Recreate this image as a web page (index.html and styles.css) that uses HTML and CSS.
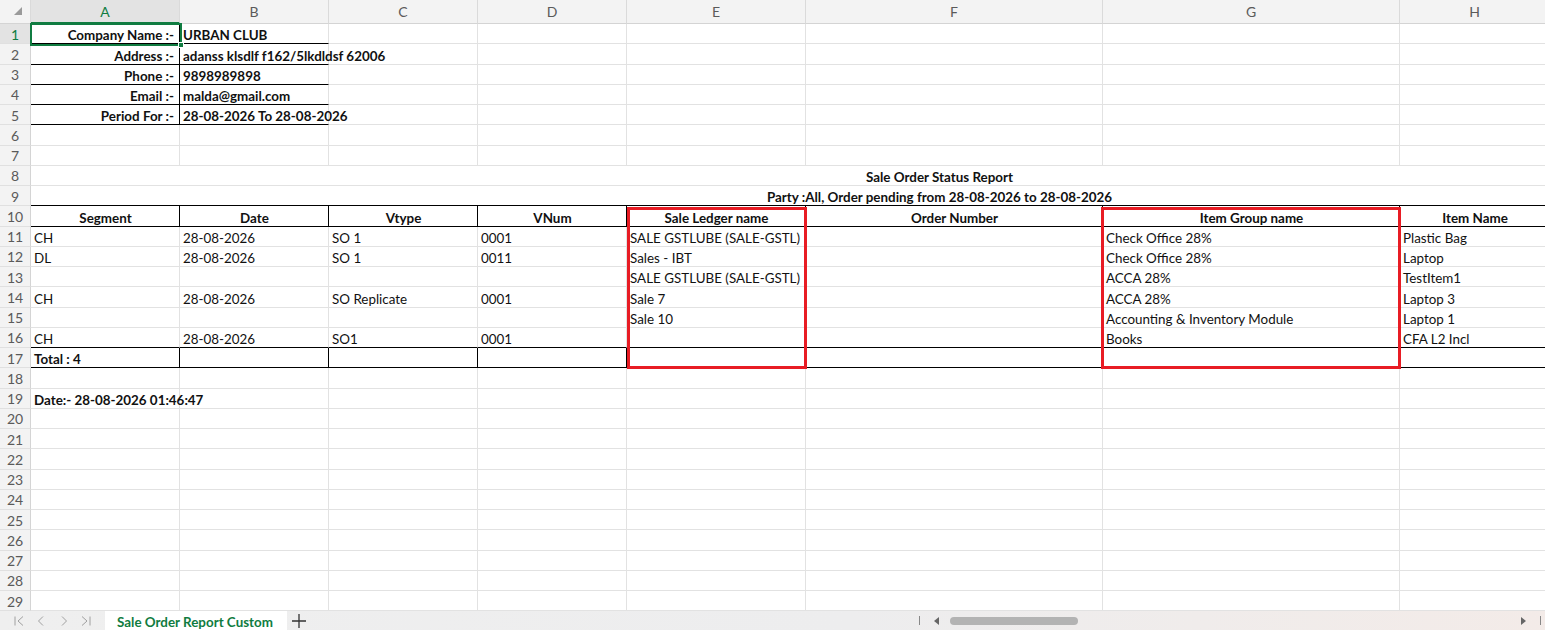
FILE: index.html
```html
<!DOCTYPE html>
<html>
<head>
<meta charset="utf-8">
<link rel="stylesheet" href="styles.css">
</head>
<body>
<div class="app">
  <div class="sheet">
    <div class="row colhead">
      <div class="corner"><svg width="10" height="10" viewBox="0 0 10 10"><polygon points="9,1 9,9 1,9" fill="#9a9a9a"/></svg></div>
      <div class="ch sel">A</div><div class="ch">B</div><div class="ch">C</div><div class="ch">D</div><div class="ch">E</div><div class="ch">F</div><div class="ch">G</div><div class="ch">H</div>
    </div>

    <div class="row"><div class="rh sel">1</div><div class="c b r bb br">Company Name :-</div><div class="c b bb">URBAN CLUB</div><div class="c"></div><div class="c"></div><div class="c"></div><div class="c"></div><div class="c"></div><div class="c"></div></div>
    <div class="row"><div class="rh">2</div><div class="c b r bb br">Address :-</div><div class="c b bb">adanss klsdlf f162/5lkdldsf 62006</div><div class="c"></div><div class="c"></div><div class="c"></div><div class="c"></div><div class="c"></div><div class="c"></div></div>
    <div class="row"><div class="rh">3</div><div class="c b r bb br">Phone :-</div><div class="c b bb">9898989898</div><div class="c"></div><div class="c"></div><div class="c"></div><div class="c"></div><div class="c"></div><div class="c"></div></div>
    <div class="row"><div class="rh">4</div><div class="c b r bb br">Email :-</div><div class="c b bb">malda@gmail.com</div><div class="c"></div><div class="c"></div><div class="c"></div><div class="c"></div><div class="c"></div><div class="c"></div></div>
    <div class="row"><div class="rh">5</div><div class="c b r bb br">Period For :-</div><div class="c b bb">28-08-2026 To 28-08-2026</div><div class="c"></div><div class="c"></div><div class="c"></div><div class="c"></div><div class="c"></div><div class="c"></div></div>
    <div class="row"><div class="rh">6</div><div class="c"></div><div class="c"></div><div class="c"></div><div class="c"></div><div class="c"></div><div class="c"></div><div class="c"></div><div class="c"></div></div>
    <div class="row"><div class="rh">7</div><div class="c"></div><div class="c"></div><div class="c"></div><div class="c"></div><div class="c"></div><div class="c"></div><div class="c"></div><div class="c"></div></div>
    <div class="row"><div class="rh">8</div><div class="c b merged">Sale Order Status Report</div></div>
    <div class="row"><div class="rh">9</div><div class="c b merged bb">Party :All, Order pending from 28-08-2026 to 28-08-2026</div></div>

    <div class="row"><div class="rh">10</div><div class="c b m bb br">Segment</div><div class="c b m bb br">Date</div><div class="c b m bb br">Vtype</div><div class="c b m bb br">VNum</div><div class="c b m bb br">Sale Ledger name</div><div class="c b m bb br">Order Number</div><div class="c b m bb br">Item Group name</div><div class="c b m bb br">Item Name</div></div>
    <div class="row"><div class="rh">11</div><div class="c">CH</div><div class="c">28-08-2026</div><div class="c">SO 1</div><div class="c">0001</div><div class="c">SALE GSTLUBE (SALE-GSTL)</div><div class="c"></div><div class="c">Check Office 28%</div><div class="c">Plastic Bag</div></div>
    <div class="row"><div class="rh">12</div><div class="c">DL</div><div class="c">28-08-2026</div><div class="c">SO 1</div><div class="c">0011</div><div class="c">Sales - IBT</div><div class="c"></div><div class="c">Check Office 28%</div><div class="c">Laptop</div></div>
    <div class="row"><div class="rh">13</div><div class="c"></div><div class="c"></div><div class="c"></div><div class="c"></div><div class="c">SALE GSTLUBE (SALE-GSTL)</div><div class="c"></div><div class="c">ACCA 28%</div><div class="c">TestItem1</div></div>
    <div class="row"><div class="rh">14</div><div class="c">CH</div><div class="c">28-08-2026</div><div class="c">SO Replicate</div><div class="c">0001</div><div class="c">Sale 7</div><div class="c"></div><div class="c">ACCA 28%</div><div class="c">Laptop 3</div></div>
    <div class="row"><div class="rh">15</div><div class="c"></div><div class="c"></div><div class="c"></div><div class="c"></div><div class="c">Sale 10</div><div class="c"></div><div class="c">Accounting &amp; Inventory Module</div><div class="c">Laptop 1</div></div>
    <div class="row"><div class="rh">16</div><div class="c bb">CH</div><div class="c bb">28-08-2026</div><div class="c bb">SO1</div><div class="c bb">0001</div><div class="c bb"></div><div class="c bb"></div><div class="c bb">Books</div><div class="c bb">CFA L2 Incl</div></div>
    <div class="row"><div class="rh">17</div><div class="c b bb br">Total : 4</div><div class="c bb br"></div><div class="c bb br"></div><div class="c bb br"></div><div class="c bb br"></div><div class="c bb br"></div><div class="c bb br"></div><div class="c bb br"></div></div>
    <div class="row"><div class="rh">18</div><div class="c"></div><div class="c"></div><div class="c"></div><div class="c"></div><div class="c"></div><div class="c"></div><div class="c"></div><div class="c"></div></div>
    <div class="row"><div class="rh">19</div><div class="c b">Date:- 28-08-2026 01:46:47</div><div class="c"></div><div class="c"></div><div class="c"></div><div class="c"></div><div class="c"></div><div class="c"></div><div class="c"></div></div>
    <div class="row"><div class="rh">20</div><div class="c"></div><div class="c"></div><div class="c"></div><div class="c"></div><div class="c"></div><div class="c"></div><div class="c"></div><div class="c"></div></div>
    <div class="row"><div class="rh">21</div><div class="c"></div><div class="c"></div><div class="c"></div><div class="c"></div><div class="c"></div><div class="c"></div><div class="c"></div><div class="c"></div></div>
    <div class="row"><div class="rh">22</div><div class="c"></div><div class="c"></div><div class="c"></div><div class="c"></div><div class="c"></div><div class="c"></div><div class="c"></div><div class="c"></div></div>
    <div class="row"><div class="rh">23</div><div class="c"></div><div class="c"></div><div class="c"></div><div class="c"></div><div class="c"></div><div class="c"></div><div class="c"></div><div class="c"></div></div>
    <div class="row"><div class="rh">24</div><div class="c"></div><div class="c"></div><div class="c"></div><div class="c"></div><div class="c"></div><div class="c"></div><div class="c"></div><div class="c"></div></div>
    <div class="row"><div class="rh">25</div><div class="c"></div><div class="c"></div><div class="c"></div><div class="c"></div><div class="c"></div><div class="c"></div><div class="c"></div><div class="c"></div></div>
    <div class="row"><div class="rh">26</div><div class="c"></div><div class="c"></div><div class="c"></div><div class="c"></div><div class="c"></div><div class="c"></div><div class="c"></div><div class="c"></div></div>
    <div class="row"><div class="rh">27</div><div class="c"></div><div class="c"></div><div class="c"></div><div class="c"></div><div class="c"></div><div class="c"></div><div class="c"></div><div class="c"></div></div>
    <div class="row"><div class="rh">28</div><div class="c"></div><div class="c"></div><div class="c"></div><div class="c"></div><div class="c"></div><div class="c"></div><div class="c"></div><div class="c"></div></div>
    <div class="row"><div class="rh">29</div><div class="c"></div><div class="c"></div><div class="c"></div><div class="c"></div><div class="c"></div><div class="c"></div><div class="c"></div><div class="c"></div></div>

    <div class="selection"><span class="handle"></span></div>
    <div class="redbox box-e"></div>
    <div class="redbox box-g"></div>
  </div>

  <div class="tabbar">
    <div class="nav">
      <svg width="12" height="12" viewBox="0 0 12 12"><path d="M2 1.5v9M10 1.5 5 6l5 4.5" fill="none" stroke="#a0a0a0" stroke-width="1"/></svg>
      <svg width="12" height="12" viewBox="0 0 12 12"><path d="M8 1.5 3.5 6 8 10.5" fill="none" stroke="#a0a0a0" stroke-width="1"/></svg>
      <svg width="12" height="12" viewBox="0 0 12 12"><path d="M4 1.5 8.5 6 4 10.5" fill="none" stroke="#a0a0a0" stroke-width="1"/></svg>
      <svg width="12" height="12" viewBox="0 0 12 12"><path d="M2 1.5 7 6l-5 4.5M10 1.5v9" fill="none" stroke="#a0a0a0" stroke-width="1"/></svg>
    </div>
    <div class="tab">Sale Order Report Custom</div>
    <div class="add"><svg width="14" height="14" viewBox="0 0 14 14"><path d="M7 0v14M0 7h14" stroke="#333" stroke-width="1.3"/></svg></div>
    <div class="spacer"></div>
    <div class="hscroll">
      <span class="tick"></span>
      <svg class="arrow-l" width="6" height="8" viewBox="0 0 6 8"><polygon points="5,0 5,8 0,4" fill="#666"/></svg>
      <span class="thumb"></span>
      <span class="track"></span>
      <svg class="arrow-r" width="6" height="8" viewBox="0 0 6 8"><polygon points="1,0 1,8 6,4" fill="#666"/></svg>
      <span class="tick"></span>
    </div>
  </div>
</div>
</body>
</html>
```

FILE: styles.css
```css
* { box-sizing: border-box; }
html, body { margin: 0; padding: 0; }
body {
  width: 1545px;
  height: 630px;
  overflow: hidden;
  background: #fff;
  font-family: Lato, "Liberation Sans", sans-serif;
  font-size: 13.4px;
  color: #111;
}
.app { display: flex; flex-direction: column; height: 630px; }
.sheet { position: relative; flex: none; }
.row {
  display: grid;
  grid-template-columns: 31px 149px 149px 149px 149px 179px 297px 297px 150px;
  height: 20.25px;
  width: 1550px;
}
.colhead { height: 24px; background: #f3f3f3; }
.corner {
  display: flex; align-items: flex-end; justify-content: flex-end;
  padding: 0 7px 7px 0;
  border-right: 1px solid #dadada;
  border-bottom: 1px solid #d4d4d4;
}
.ch {
  display: flex; align-items: center; justify-content: center;
  color: #5a5a5a; font-size: 14px;
  border-right: 1px solid #dadada;
  border-bottom: 1px solid #d4d4d4;
}
.ch.sel { background: #e3e3e3; color: #107c41; border-bottom: 2px solid #107c41; }
.rh {
  display: flex; align-items: center; justify-content: center;
  color: #5a5a5a; font-size: 14px;
  padding-top: 1px;
  background: #f3f3f3;
  border-right: 1px solid #d4d4d4;
  border-bottom: 1px solid #e0e0e0;
}
.rh.sel { background: #e3e3e3; color: #107c41; }
.c {
  display: flex; align-items: flex-end;
  padding: 0 2px 0 3px;
  white-space: nowrap;
  line-height: 15px;
  border-right: 1px solid #e2e2e2;
  border-bottom: 1px solid #e2e2e2;
  min-width: 0;
}
.b { font-weight: bold; }
.r { justify-content: flex-end; padding-right: 5px; }
.m { justify-content: center; }
.bb { border-bottom-color: #000; }
.br { border-right-color: #000; }
.merged {
  grid-column: 2 / -1;
  justify-content: center;
  padding-left: 300px;
  border-right: none;
}
.selection {
  position: absolute;
  left: 30px; top: 23px;
  width: 152px; height: 23px;
  border: 2px solid #107c41;
}
.handle {
  position: absolute;
  right: -4px; bottom: -4px;
  width: 6px; height: 6px;
  background: #107c41;
  border: 1px solid #fff;
}
.redbox {
  position: absolute;
  border: 3px solid #e81c24;
  top: 207px;
  height: 162px;
}
.box-e { left: 627px; width: 180px; }
.box-g { left: 1101px; width: 300px; }

.tabbar {
  flex: 1;
  display: flex;
  align-items: stretch;
  background: linear-gradient(90deg, #efefef 0%, #ededee 55%, #f3ebe8 100%);
}
.nav {
  width: 105px;
  display: flex; align-items: center; justify-content: space-around;
  padding: 0 8px 0 8px;
}
.tab {
  background: #fff;
  color: #107c41;
  font-weight: bold;
  font-size: 13.4px;
  padding: 2px 10px 0 12px;
  display: flex; align-items: center;
  width: 182px;
}
.add { width: 24px; display: flex; align-items: center; justify-content: center; }
.spacer { flex: 1; }
.hscroll {
  width: 630px;
  display: flex; align-items: center;
  padding: 0 4px 0 4px;
}
.tick { width: 1px; height: 9px; background: #888; flex: none; }
.arrow-l { margin-left: 14px; flex: none; }
.thumb { margin-left: 10px; width: 128px; height: 8px; border-radius: 4px; background: #b3b3b3; flex: none; }
.track { flex: 1; }
.arrow-r { margin-right: 14px; flex: none; }
```
